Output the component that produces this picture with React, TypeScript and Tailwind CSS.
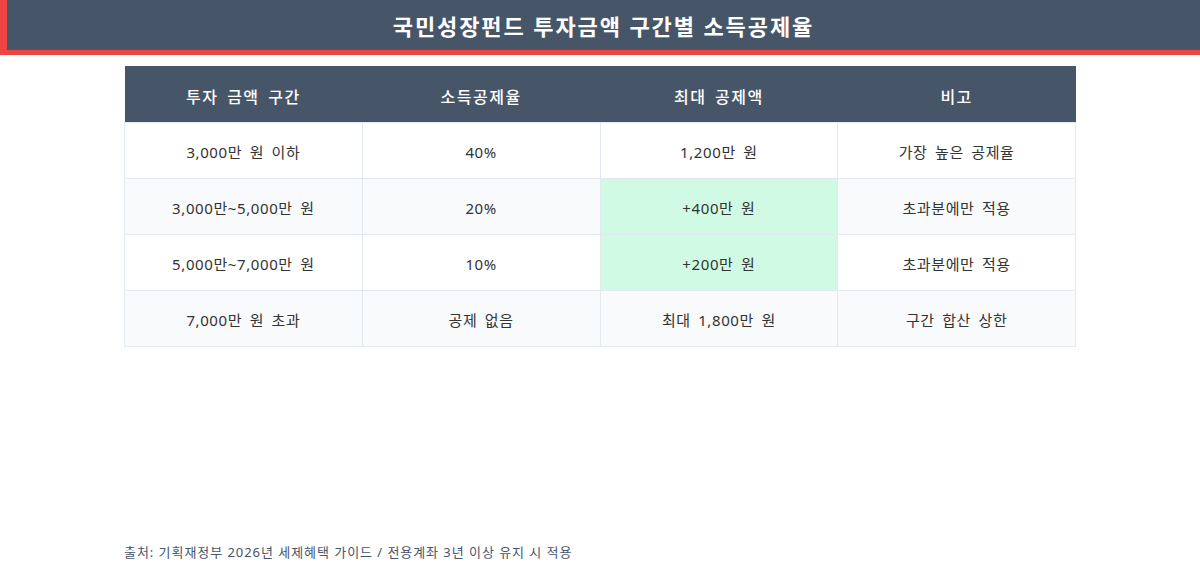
const rows = [
  { range: "3,000만 원 이하", rate: "40%", max: "1,200만 원", note: "가장 높은 공제율", hi: false },
  { range: "3,000만~5,000만 원", rate: "20%", max: "+400만 원", note: "초과분에만 적용", hi: true },
  { range: "5,000만~7,000만 원", rate: "10%", max: "+200만 원", note: "초과분에만 적용", hi: true },
  { range: "7,000만 원 초과", rate: "공제 없음", max: "최대 1,800만 원", note: "구간 합산 상한", hi: false },
];

export default function App() {
  return (
    <div
      className="flex h-[570px] w-[1200px] flex-col bg-white"
      style={{ fontFamily: '"Noto Sans", "Noto Sans CJK KR", sans-serif' }}
    >
      <header className="flex h-[55px] items-center justify-center border-b-[5px] border-l-[7px] border-[#ef4444] bg-[#475569] pt-[3px]">
        <h1 className="text-[22px] font-bold tracking-[1.9px] text-white">국민성장펀드 투자금액 구간별 소득공제율</h1>
      </header>

      <div className="mx-[124px] mt-[11px]">
        <table className="w-full table-fixed border-collapse text-center">
          <thead>
            <tr className="h-[56px] bg-[#475569] text-[16px] tracking-[1.5px] text-white [word-spacing:3px]">
              <th className="pt-[6px] font-medium">투자 금액 구간</th>
              <th className="pt-[6px] font-medium">소득공제율</th>
              <th className="pt-[6px] font-medium">최대 공제액</th>
              <th className="pt-[6px] font-medium">비고</th>
            </tr>
          </thead>
          <tbody className="text-[15px] tracking-[0.6px] text-[#333333] [word-spacing:3px]">
            {rows.map((r, i) => (
              <tr key={i} className={i % 2 === 1 ? "h-[56px] bg-[#f8fafc]" : "h-[56px] bg-white"}>
                <td className="border border-[#e2e8f0] pt-[4px]">{r.range}</td>
                <td className="border border-[#e2e8f0] pt-[4px]">{r.rate}</td>
                <td className={r.hi ? "border border-[#e2e8f0] bg-[#d1fae5] pt-[4px]" : "border border-[#e2e8f0] pt-[4px]"}>
                  {r.max}
                </td>
                <td className="border border-[#e2e8f0] pt-[4px]">{r.note}</td>
              </tr>
            ))}
          </tbody>
        </table>
      </div>

      <p className="mt-auto mb-[8px] ml-[124px] text-[13px] tracking-[0.95px] text-[#475569]">
        출처: 기획재정부 2026년 세제혜택 가이드 / 전용계좌 3년 이상 유지 시 적용
      </p>
    </div>
  );
}
